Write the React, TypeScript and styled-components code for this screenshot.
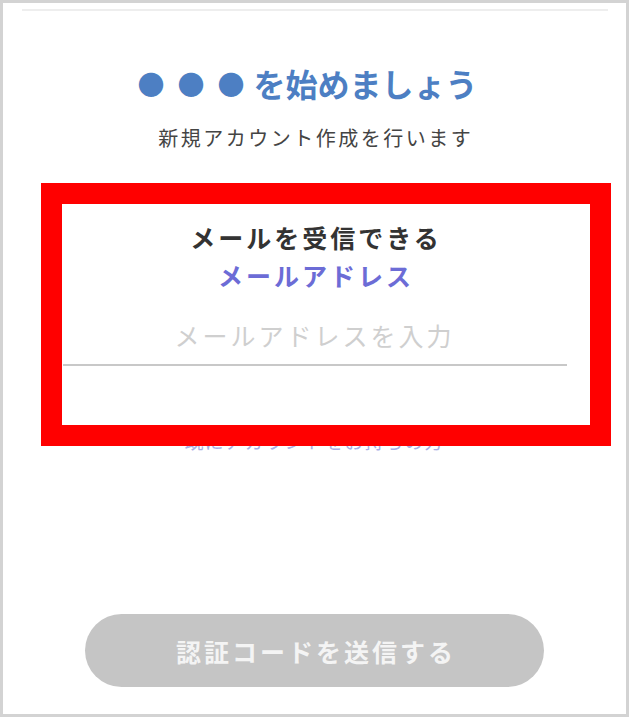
import React from "react";
import styled, { createGlobalStyle } from "styled-components";

const Global = createGlobalStyle`
  html, body { margin: 0; padding: 0; background: #ffffff; }
  body { font-family: "Noto Sans CJK JP", "Noto Sans", sans-serif; }
  * { box-sizing: border-box; }
`;

const Frame = styled.div`
  position: relative;
  width: 629px;
  height: 717px;
  border: 3px solid #d3d3d3;
  background: #ffffff;
  display: flex;
  flex-direction: column;
  align-items: center;
  overflow: hidden;
`;

const TopLine = styled.div`
  width: 586px;
  height: 2px;
  margin-top: 6px;
  background: #eeeeee;
`;

const Title = styled.h1`
  margin: 52px 0 0;
  padding-right: 14px;
  font-size: 32px;
  line-height: 40px;
  font-weight: 700;
  color: #4d7fc3;
  white-space: nowrap;
`;

const Dots = styled.span`
  display: inline-block;
  font-size: 27px;
  letter-spacing: 13px;
  margin-right: -4px;
  vertical-align: 2px;
`;

const Subtitle = styled.p`
  margin: 22px 0 0;
  padding-left: 2.5px;
  font-size: 20px;
  line-height: 24px;
  letter-spacing: 2.5px;
  color: #444444;
`;

const Label = styled.div<{ $accent?: boolean; $gap: number }>`
  margin-top: ${(p) => p.$gap}px;
  padding-left: 3px;
  font-size: 25px;
  line-height: 30px;
  font-weight: 700;
  letter-spacing: 3px;
  color: ${(p) => (p.$accent ? "#6c6cd6" : "#333333")};
`;

const EmailInput = styled.input`
  display: block;
  margin-top: 16px;
  width: 504px;
  height: 60px;
  padding: 0;
  border: none;
  border-bottom: 2px solid #c8c8c8;
  outline: none;
  background: transparent;
  text-align: center;
  font-family: "Noto Sans CJK JP", "Noto Sans", sans-serif;
  font-size: 25px;
  letter-spacing: 3px;
  color: #333333;
  &::placeholder {
    color: #cfcfcf;
  }
`;

const LinkText = styled.a`
  margin-top: 62px;
  font-size: 19px;
  line-height: 26px;
  letter-spacing: 1px;
  color: #a9aee6;
  text-decoration: none;
`;

const SendButton = styled.button`
  margin-top: 160px;
  width: 459px;
  height: 73px;
  border: none;
  border-radius: 37px;
  background: #c5c5c5;
  color: #f4f4f4;
  font-family: "Noto Sans CJK JP", "Noto Sans", sans-serif;
  font-size: 25px;
  font-weight: 700;
  letter-spacing: 3px;
  padding: 0 0 0 3px;
  cursor: default;
`;

const Highlight = styled.div`
  position: absolute;
  left: 38px;
  top: 180px;
  width: 570px;
  height: 263px;
  border: 21px solid #ff0000;
  pointer-events: none;
`;

export default function App() {
  return (
    <>
      <Global />
      <Frame>
        <TopLine />
        <Title>
          <Dots>●●●</Dots>を始めましょう
        </Title>
        <Subtitle>新規アカウント作成を行います</Subtitle>
        <Label $gap={72}>メールを受信できる</Label>
        <Label $accent $gap={8}>
          メールアドレス
        </Label>
        <EmailInput type="email" placeholder="メールアドレスを入力" />
        <LinkText href="#">既にアカウントをお持ちの方</LinkText>
        <SendButton disabled>認証コードを送信する</SendButton>
        <Highlight />
      </Frame>
    </>
  );
}
